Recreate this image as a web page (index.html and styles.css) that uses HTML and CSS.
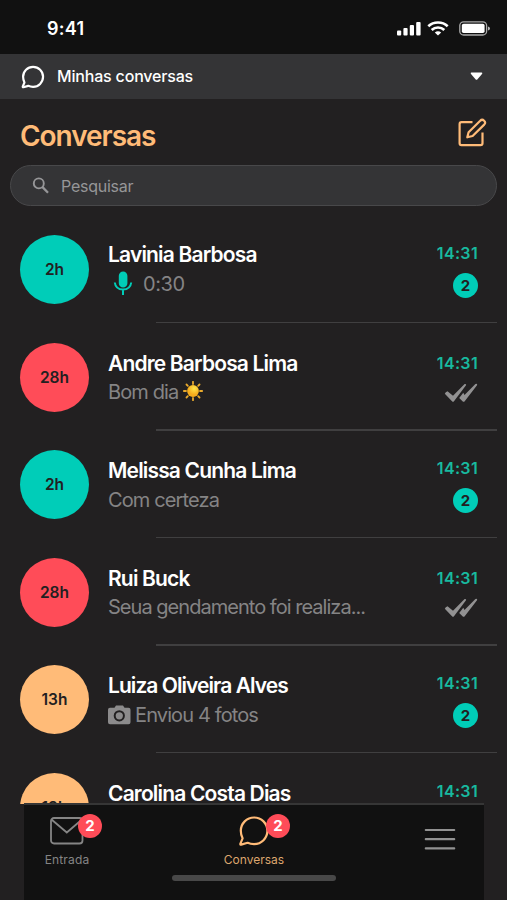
FILE: index.html
```html
<!DOCTYPE html>
<html lang="pt-BR">
<head>
<meta charset="utf-8">
<meta name="viewport" content="width=device-width">
<title>Conversas</title>
<link rel="stylesheet" href="styles.css">
</head>
<body>
<svg class="defs" width="0" height="0">
  <symbol id="checks" viewBox="0 0 34 20"><path d="M.8 10.8Q1.5 8.7 3.5 8.2L9 12.7L20.6 1Q22 .5 22.2 2L10 18.2Q9 19.3 8 18.2ZM15.2 15L19.3 9.8L20.5 12L31.4 1Q33.2.3 33.2 2L20.7 18.2Q19.7 19.3 18.5 18.2Z"/></symbol>
  <symbol id="bubble" viewBox="0 0 32 32"><path d="M3.2 29.6Q2 29.8 2.4 28.6L4.6 23.3Q2.8 20 2.8 15.8A13.3 13.3 0 1 1 16.1 29.1Q12.5 29.1 9.6 27.8Z"/></symbol>
</svg>
<div class="app">
  <header class="status">
    <span class="clock">9:41</span>
    <div class="indicators">
      <svg width="24" height="15" viewBox="0 0 24 15" fill="#fff"><rect x="0" y="9.5" width="4.2" height="5" rx="1"/><rect x="6.4" y="7" width="4.2" height="7.5" rx="1"/><rect x="12.8" y="4" width="4.2" height="10.5" rx="1"/><rect x="19.2" y="1" width="4.4" height="13.5" rx="1"/></svg>
      <svg class="wifi" width="22" height="15" viewBox="0 0 22 15" fill="none" stroke="#fff" stroke-width="2.6"><path d="M1.3 5.2C6.6.2 15.4.2 20.7 5.2M4.7 9C8.1 5.6 13.9 5.6 17.3 9"/><path d="M7.8 11.4Q11 8.9 14.2 11.4L11 14.6Z" fill="#fff" stroke="none"/></svg>
      <svg class="battery" width="32" height="15" viewBox="0 0 32 15"><rect x=".8" y=".8" width="26.8" height="13.2" rx="3.8" fill="none" stroke="#aaa" stroke-width="1.3"/><rect x="2.8" y="2.8" width="22.8" height="9.2" rx="1.8" fill="#fff"/><path d="M29 5.4Q31 6 31 7.4T29 9.4Z" fill="#bbb"/></svg>
    </div>
  </header>
  <div class="selector">
    <svg width="24" height="24" viewBox="0 0 32 32" fill="none" stroke="#fff" stroke-width="2.9" stroke-linejoin="round"><use href="#bubble"/></svg>
    <span class="selector-label">Minhas conversas</span>
    <svg width="13" height="9" viewBox="0 0 13 9" fill="#fff"><path d="M1.4.5H11.6Q13 .5 12 2L7.5 7.2Q6.5 8.2 5.5 7.2L1 2Q0 .5 1.4.5Z"/></svg>
  </div>
  <div class="heading">
    <h1>Conversas</h1>
    <svg width="30" height="30" viewBox="0 0 30 30" fill="none" stroke="#ffbb78" stroke-width="2.2" stroke-linejoin="round"><path d="M15.5 4.2H4.5Q2.6 4.2 2.6 6.2V25.3Q2.6 27.2 4.5 27.2H23.5Q25.5 27.2 25.5 25.3V14.5"/><path d="M10.3 19.3L11.6 14.3L23.2 2.8A2.7 2.7 0 0 1 27.2 6.6L15.6 18Z"/></svg>
  </div>
  <div class="search">
    <svg width="18" height="18" viewBox="0 0 18 18" fill="none" stroke="#969698" stroke-width="1.9"><circle cx="6.8" cy="6.4" r="5"/><path d="M10.3 9.9L16 15.8" stroke-width="2.3"/></svg>
    <span>Pesquisar</span>
  </div>
  <main class="list">
    <article class="row">
      <div class="avatar teal">2h</div>
      <div class="content"><h2>Lavinia Barbosa</h2><p class="audio"><svg width="20" height="26" viewBox="0 0 20 26" fill="none" stroke="#00cdb8" stroke-width="2"><rect x="6.8" y="1.5" width="6.6" height="14" rx="3.3" fill="#00cdb8"/><path d="M1.8 11.5Q2.6 18.5 10 18.5T18.2 11.5M10 18.5V24" /></svg><span>0:30</span></p></div>
      <div class="meta"><time>14:31</time><span class="count">2</span></div>
    </article>
    <article class="row lower">
      <div class="avatar red">28h</div>
      <div class="content"><h2>Andre Barbosa Lima</h2><p><span>Bom dia</span><svg class="sun" width="20" height="20" viewBox="0 0 20 20"><defs><radialGradient id="sun" cx=".6" cy=".3"><stop offset="0" stop-color="#ffe64a"/><stop offset="1" stop-color="#f6ad1d"/></radialGradient></defs><path d="M10 .8V3M10 17V19.2M.8 10H3M17 10H19.2M3.5 3.5L4.8 4.8M15.2 15.2L16.5 16.5M3.5 16.5L4.8 15.2M15.2 4.8L16.5 3.5" stroke="#e9aa2d" stroke-width="1.8" stroke-linecap="round"/><circle cx="10" cy="10" r="5.9" fill="url(#sun)"/></svg></p></div>
      <div class="meta late"><time>14:31</time><svg class="checks" width="34" height="20"><use href="#checks"/></svg></div>
    </article>
    <article class="row lower">
      <div class="avatar teal">2h</div>
      <div class="content"><h2>Melissa Cunha Lima</h2><p><span>Com certeza</span></p></div>
      <div class="meta"><time>14:31</time><span class="count">2</span></div>
    </article>
    <article class="row lower">
      <div class="avatar red">28h</div>
      <div class="content"><h2>Rui Buck</h2><p><span class="long">Seua gendamento foi realiza...</span></p></div>
      <div class="meta late"><time>14:31</time><svg class="checks" width="34" height="20"><use href="#checks"/></svg></div>
    </article>
    <article class="row lower">
      <div class="avatar orange">13h</div>
      <div class="content"><h2 class="tight">Luiza Oliveira Alves</h2><p><svg class="camera" width="23" height="20" viewBox="0 0 23 20"><path fill="#8c8b8c" fill-rule="evenodd" d="M2 2.7H6.5L8 .5H15L16.5 2.7H20.5Q22.5 2.7 22.5 4.7V17.3Q22.5 19.3 20.5 19.3H2Q0 19.3 0 17.3V4.7Q0 2.7 2 2.7ZM11.3 5.2A5.6 5.6 0 1 0 11.3 16.4A5.6 5.6 0 1 0 11.3 5.2Z"/><circle cx="11.3" cy="10.8" r="3.6" fill="#8c8b8c"/></svg><span>Enviou 4 fotos</span></p></div>
      <div class="meta"><time>14:31</time><span class="count">2</span></div>
    </article>
    <article class="row lower">
      <div class="avatar orange">13h</div>
      <div class="content"><h2>Carolina Costa Dias</h2></div>
      <div class="meta"><time>14:31</time></div>
    </article>
  </main>
  <nav class="tabs">
    <div class="tab"><div class="icon"><svg class="mail" width="34" height="28" viewBox="0 0 34 28" fill="none" stroke="#858585" stroke-width="1.8"><rect x="1" y="1" width="31.5" height="25.5" rx="3"/><path d="M1.5 2.5L16.8 15.5L32 2.5"/></svg><b>2</b></div><span>Entrada</span></div>
    <div class="tab active"><div class="icon"><svg width="32" height="32" viewBox="0 0 32 32" fill="none" stroke="#ffbb78" stroke-width="2.2" stroke-linejoin="round"><use href="#bubble"/></svg><b>2</b></div><span>Conversas</span></div>
    <div class="tab"><svg class="menu" width="32" height="23" viewBox="0 0 32 23" stroke="#929292" stroke-width="2.2" stroke-linecap="round"><path d="M1.8 2H30.2M1.8 11.2H30.2M1.8 20.4H30.2"/></svg></div>
    <div class="home"></div>
  </nav>
</div>
</body>
</html>
```
FILE: styles.css
```css
* { box-sizing: border-box; }
body { margin: 0; background: #222021; font-family: Inter, "Liberation Sans", sans-serif; color: #fff; }
.defs { display: block; }
.app { width: 507px; height: 900px; overflow: hidden; display: flex; flex-direction: column; }
.status { height: 54px; flex: none; background: #111; display: flex; justify-content: space-between; padding: 0 16px 0 47px; }
.clock { font-size: 18px; line-height: 24px; font-weight: 600; margin-top: 17px; letter-spacing: .25px; }
.indicators { display: flex; padding-top: 21px; }
.wifi { margin-left: 6px; }
.battery { margin-left: 10px; }
.selector { height: 45px; flex: none; background: #343436; display: flex; align-items: center; padding: 0 24px 0 21px; }
.selector-label { flex: 1; margin: -1px 0 0 12px; font-size: 16px; font-weight: 500; letter-spacing: -.18px; }
.heading { height: 66px; flex: none; display: flex; justify-content: space-between; padding: 19px 20px 0; }
h1, h2, p { margin: 0; }
h1 { font-size: 28px; line-height: 36px; font-weight: 600; color: #ffbb78; letter-spacing: -1.05px; }
.search { height: 41px; flex: none; margin: 0 10px 1px; border: 1px solid #48484a; border-radius: 21px; background: #343436; display: flex; align-items: center; gap: 11px; padding-left: 21px; color: #969698; font-size: 16px; letter-spacing: -.25px; }
.list { flex: none; height: 597px; padding-top: 9px; overflow: hidden; }
.row { height: 107.6px; display: grid; grid-template-columns: 88px 1fr 60px; margin: 0 29px 0 20px; position: relative; }
.row::after { content: ""; position: absolute; left: 136px; right: -19px; bottom: .5px; height: 1.5px; background: #403f40; }
.avatar { width: 69px; height: 69px; border-radius: 50%; margin-top: 19px; display: grid; place-items: center; font-size: 15.5px; font-weight: 600; color: #222021; }
.teal { background: #00cdb8; }
.red { background: #ff4c58; }
.orange { background: #ffbb78; }
.content { padding-top: 25px; white-space: nowrap; }
.lower .content { padding-top: 26px; }
h2 { font-size: 21px; line-height: 28px; font-weight: 600; letter-spacing: -.83px; }
.tight { letter-spacing: -.95px; }
p { display: flex; align-items: center; height: 30px; font-size: 20px; color: #858485; letter-spacing: -.88px; }
.long { letter-spacing: -.97px; }
.lower p { height: 29px; }
.audio { letter-spacing: -.4px; }
.audio svg { margin: 0 10px 0 5px; }
.sun { margin: -2px 0 0 5px; }
.camera { margin-right: 4px; }
.meta { display: flex; flex-direction: column; align-items: flex-end; padding-top: 27px; }
.late { padding-top: 29px; }
time { font-size: 16px; line-height: 20px; font-weight: 600; color: #18b99f; letter-spacing: .35px; }
.count { width: 25px; height: 25px; border-radius: 50%; margin-top: 10px; background: #00cdb8; color: #222021; font-size: 15px; font-weight: 700; line-height: 25px; text-align: center; }
.checks { fill: #929192; margin-top: 10px; }
.tabs { height: 97px; flex: none; margin: -1px 23px 0 24px; background: #111; border-top: 2px solid #363636; position: relative; display: grid; grid-template-columns: 86px 1fr 86px; padding-top: 9px; }
.tab { display: flex; flex-direction: column; align-items: center; color: #858585; font-size: 12px; line-height: 16px; letter-spacing: .15px; }
.active { color: #dda66e; letter-spacing: 0; }
.icon { position: relative; height: 38px; padding-top: 1px; }
.mail { margin-top: 2px; }
.icon b { position: absolute; left: 28px; top: 0; width: 24px; height: 24px; border-radius: 50%; background: #ff4c58; color: #fff; font-size: 15px; line-height: 24px; text-align: center; }
.menu { margin: 14px 2px 0 0; }
.home { position: absolute; left: 148px; bottom: 19px; width: 164px; height: 6px; border-radius: 3px; background: #484848; }
```
